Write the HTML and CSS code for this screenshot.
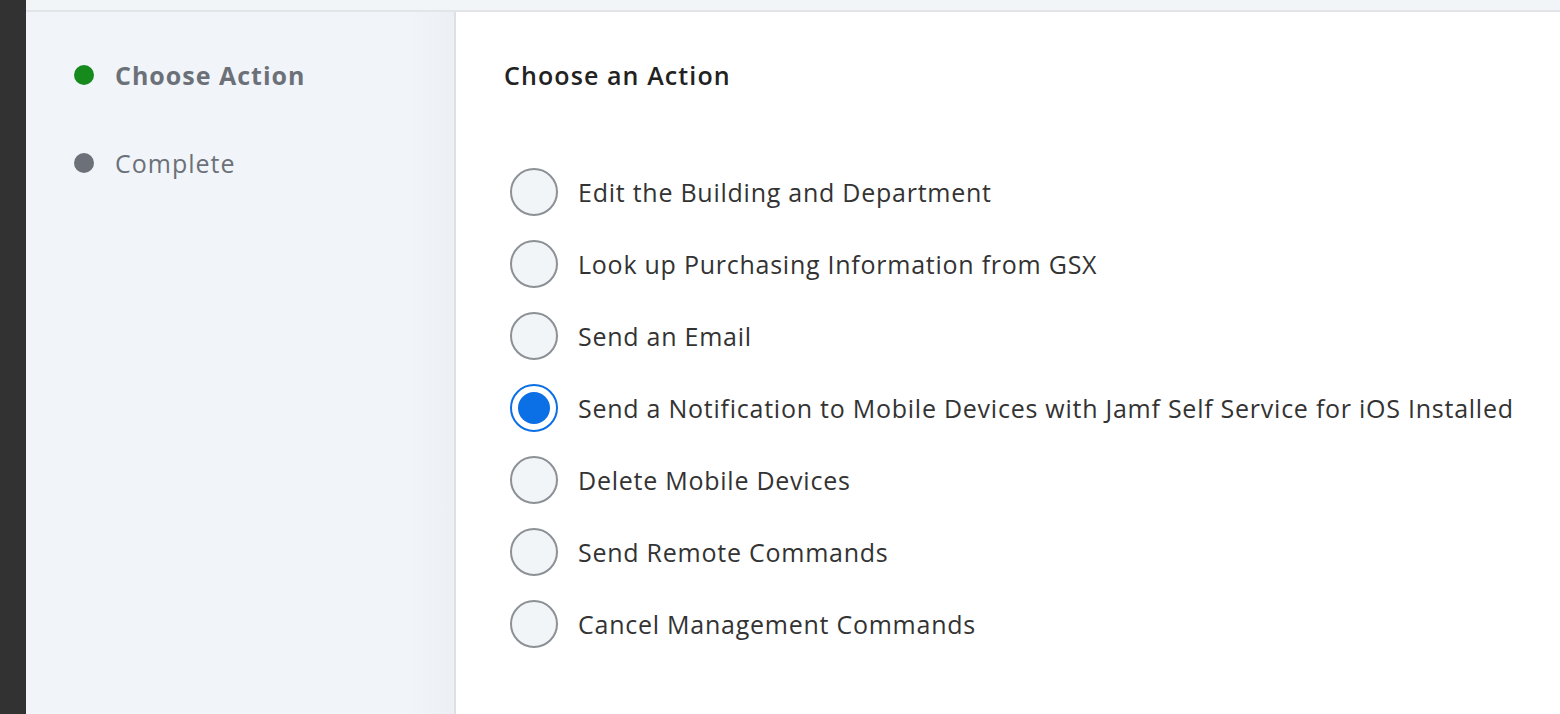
FILE: index.html
```html
<!DOCTYPE html>
<html lang="en">
<head>
    <meta charset="UTF-8">
    <title>Mass Action</title>
    <link rel="stylesheet" href="styles.css">
</head>
<body>
    <div class="edge"></div>
    <div class="page">
        <div class="topbar"></div>
        <div class="wrap">
            <div class="sidebar">
                <div class="step active"><span class="dot"></span>Choose Action</div>
                <div class="step"><span class="dot"></span>Complete</div>
            </div>
            <div class="main">
                <h2>Choose an Action</h2>
                <div class="options">
                    <label class="opt"><span class="radio"></span>Edit the Building and Department</label>
                    <label class="opt"><span class="radio"></span>Look up Purchasing Information from GSX</label>
                    <label class="opt"><span class="radio"></span>Send an Email</label>
                    <label class="opt checked"><span class="radio"></span>Send a Notification to Mobile Devices with Jamf Self Service for iOS Installed</label>
                    <label class="opt"><span class="radio"></span>Delete Mobile Devices</label>
                    <label class="opt"><span class="radio"></span>Send Remote Commands</label>
                    <label class="opt"><span class="radio"></span>Cancel Management Commands</label>
                </div>
            </div>
        </div>
    </div>
</body>
</html>
```

FILE: styles.css
```css
html, body {
    margin: 0;
    height: 100%;
}
body {
    display: flex;
    font-family: "Open Sans", Lato, sans-serif;
    background: #fff;
    overflow: hidden;
}
.edge {
    width: 26px;
    background-color: #323232;
    flex-shrink: 0;
}
.page {
    flex: 1;
    display: flex;
    flex-direction: column;
}
.topbar {
    height: 10px;
    background-color: #f1f5f8;
    border-bottom: 2px solid #e2e4e7;
}
.wrap {
    flex: 1;
    display: flex;
}
.sidebar {
    width: 428px;
    background: linear-gradient(to right, #f1f5f9 90%, #eceff3);
    border-right: 2px solid #dcdfe3;
    padding-top: 51px;
}
.step {
    display: flex;
    align-items: center;
    height: 24px;
    margin-bottom: 64px;
    padding-left: 48px;
    font-size: 25px;
    color: #6c7078;
    letter-spacing: 1px;
}
.step.active {
    font-weight: bold;
}
.dot {
    width: 20px;
    height: 20px;
    border-radius: 50%;
    background-color: #6c7078;
    margin-right: 21px;
}
.step.active .dot {
    background-color: #178a1e;
}
.main {
    flex: 1;
    padding-left: 48px;
    padding-top: 51px;
}
h2 {
    margin: 0;
    height: 24px;
    line-height: 24px;
    font-size: 25px;
    font-weight: 600;
    color: #222;
    letter-spacing: 1.1px;
}
.options {
    margin-top: 81px;
    display: flex;
    flex-direction: column;
    gap: 24px;
}
.opt {
    display: flex;
    align-items: center;
    height: 48px;
    font-size: 25px;
    color: #333;
    letter-spacing: 0.75px;
}
.radio {
    width: 44px;
    height: 44px;
    border: 2px solid #8d9094;
    border-radius: 50%;
    background-color: #f1f5f8;
    margin-left: 6px;
    margin-right: 20px;
    flex-shrink: 0;
    display: flex;
    align-items: center;
    justify-content: center;
}
.opt.checked .radio {
    background-color: #fff;
    border-color: #0b6fe6;
}
.opt.checked .radio::after {
    content: "";
    width: 32px;
    height: 32px;
    border-radius: 50%;
    background-color: #0b6fe6;
}
```
